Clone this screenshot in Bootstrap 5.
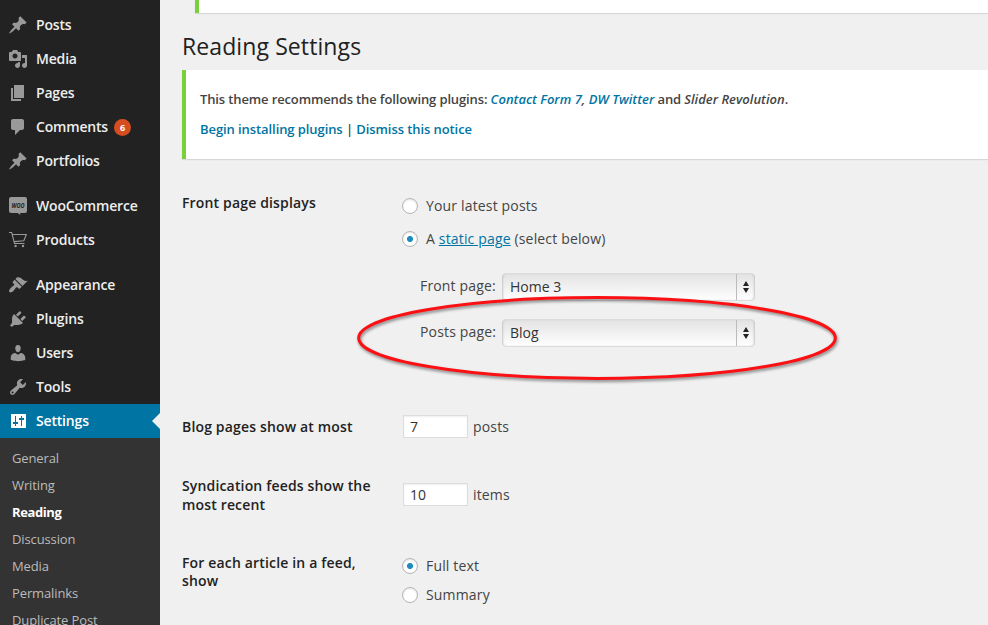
<!DOCTYPE html>
<html lang="en">
<head>
<meta charset="utf-8">
<meta name="viewport" content="width=device-width, initial-scale=1">
<title>Reading Settings</title>
<link href="https://cdn.jsdelivr.net/npm/bootstrap@5.3.0/dist/css/bootstrap.min.css" rel="stylesheet">
<style>
body{font-family:"Open Sans",sans-serif;font-size:14px;line-height:20px;color:#444;background:#f0f0f0;height:625px;overflow:hidden}
a{color:#0074a2}
.admin-menu{width:160px;height:625px;background:#222;padding-top:8px;overflow:hidden}
.admin-menu .nav-link{height:34px;padding:0 0 0 8px;gap:8px;color:#eee;font-weight:600;font-size:14px;letter-spacing:-.18px}
.admin-menu svg{width:20px;height:20px;fill:#999;flex:none}
.menu-gap{margin-top:11px}
.count{width:17px;height:17px;background:#d54e21;font-size:9px;line-height:17px;font-weight:700;padding:0;margin-left:-2px;letter-spacing:0}
.admin-menu .nav-link.active{background:#0074a2;color:#fff}
.admin-menu .active svg{fill:#fff}
.admin-menu .active::after{content:"";margin-left:auto;border:8px solid transparent;border-right-color:#f0f0f0}
.submenu{background:#333;padding-top:7px;height:190px}
.submenu .nav-link{height:27px;line-height:27px;padding:0 0 0 12px;font-size:13px;font-weight:400;color:#bbb;letter-spacing:-.12px}
.submenu .nav-link.current{color:#fff;font-weight:700;letter-spacing:-.4px}
.content-area{padding-left:22px;min-width:0}
.notice{background:#fff;border-left:4px solid #7ad03a;box-shadow:0 1px 1px rgba(0,0,0,.1)}
.notice-top{height:13px;margin-left:13px}
h1{font-size:23px;line-height:29px;font-weight:400;color:#222;margin:19px 0 9px;letter-spacing:.1px}
.notice-main{height:89px;padding:19px 14px;font-size:13px;font-weight:600;line-height:20px;letter-spacing:-.13px}
.notice-main p{margin-bottom:10px}
.notice-main em{letter-spacing:.02px}
.notice-main .actions{letter-spacing:-.08px}
.notice-main a{text-decoration:none}
.settings-form{padding-top:34px;letter-spacing:.16px}
.setting-row{display:grid;grid-template-columns:220px 1fr}
.setting-title{color:#222;font-weight:600;line-height:19px;width:205px}
.radio-line{height:20px;gap:8px}
.form-check-input.dot{width:16px;height:16px;margin:0;border:1px solid #b4b4b4;background:#fff;box-shadow:inset 0 1px 2px rgba(0,0,0,.1)}
.form-check-input.dot:checked{background:#fff radial-gradient(circle,#1e8cbe 2.7px,transparent 3.3px)}
.picker-line{height:28px;margin-left:18px}
.picker-line label{width:82px;padding-bottom:2px}
.picker{width:253px;height:28px;border:1px solid #dcdcdc;border-width:1px 0;border-radius:4px;background:linear-gradient(#e3e3e3,#fefefe);box-shadow:inset 2px 0 2px -1px #c4c4c4,inset -2px 0 2px -1px #c4c4c4;color:#333}
.picker select{appearance:none;border:0;background:none;font:inherit;color:inherit;padding:0 0 0 8px;width:234px;height:26px;outline:0}
.picker span{border-left:1px solid #bbb;width:19px;height:26px}
.picker svg{width:8px;height:14px;fill:#222}
.num{width:65px;height:23px;border:1px solid #ddd;box-shadow:inset 0 1px 2px rgba(0,0,0,.07);font-size:14px;color:#333;padding:0 6px;border-radius:0;margin-left:1px}
.circle-mark{left:350px;top:290px;pointer-events:none;filter:drop-shadow(1px 2px 1.5px rgba(0,0,0,.45))}
.front-options{margin-top:3px}
.radio-line+.radio-line{margin-top:13px}
.feed-options{margin-top:2px}
.feed-options .radio-line+.radio-line{margin-top:9px}
.first-picker{margin-top:24px}
.second-picker{margin-top:18px}
.unit{margin-left:5px}
</style>
<script src="https://cdn.jsdelivr.net/npm/bootstrap@5.3.0/dist/js/bootstrap.bundle.min.js"></script>
</head>
<body>
<div class="d-flex">
<aside class="admin-menu flex-shrink-0">
<nav class="nav flex-column flex-nowrap">
<a class="nav-link d-flex align-items-center" href="#"><svg viewBox="0 0 20 20"><path id="pin" d="M10.44 3.02l1.82-1.82 6.36 6.35-1.83 1.82c-1.05-.68-2.48-.57-3.41.36l-.75.75c-.92.93-1.04 2.35-.35 3.41l-1.83 1.82-2.41-2.41-2.8 2.79c-.42.42-3.38 2.71-3.8 2.29s1.86-3.39 2.28-3.81l2.79-2.79L4.1 9.36l1.83-1.82c1.05.69 2.48.57 3.4-.36l.75-.75c.93-.92 1.05-2.35.36-3.41z"/></svg>Posts</a>
<a class="nav-link d-flex align-items-center" href="#"><svg viewBox="0 0 20 20"><path d="M13 11V4c0-.55-.45-1-1-1h-1.67L9 1H5L3.67 3H2c-.55 0-1 .45-1 1v7c0 .55.45 1 1 1h10c.55 0 1-.45 1-1zM7 4.5c1.38 0 2.5 1.12 2.5 2.5S8.38 9.5 7 9.5 4.5 8.38 4.5 7 5.62 4.5 7 4.5zM14 6h5v10.5c0 1.38-1.12 2.5-2.5 2.5S14 17.88 14 16.5s1.12-2.5 2.5-2.5c.17 0 .34.02.5.05V9h-3V6zm-4 8.05V13h2v3.5c0 1.38-1.12 2.5-2.5 2.5S7 17.88 7 16.5 8.12 14 9.5 14c.17 0 .34.02.5.05z"/></svg>Media</a>
<a class="nav-link d-flex align-items-center" href="#"><svg viewBox="0 0 20 20"><path d="M6 15V2h10v13H6zm-1 1h8v2H3V5h2v11z"/></svg>Pages</a>
<a class="nav-link d-flex align-items-center" href="#"><svg viewBox="0 0 20 20"><path d="M5 2h9c1.1 0 2 .9 2 2v7c0 1.1-.9 2-2 2h-2l-5 5v-5H5c-1.1 0-2-.9-2-2V4c0-1.1.9-2 2-2z"/></svg>Comments<span class="badge rounded-circle count">6</span></a>
<a class="nav-link d-flex align-items-center" href="#"><svg viewBox="0 0 20 20"><use href="#pin"/></svg>Portfolios</a>
<a class="nav-link d-flex align-items-center menu-gap" href="#"><svg viewBox="0 0 20 20"><path d="M3 1h14q2 0 2 2v12q0 2-2 2h-5l.5 2-3-2H3q-2 0-2-2V3q0-2 2-2z"/><text x="10" y="11.5" text-anchor="middle" textLength="13" lengthAdjust="spacingAndGlyphs" font-size="7" font-weight="700" font-style="italic" style="fill:#222;letter-spacing:0">WOO</text></svg>WooCommerce</a>
<a class="nav-link d-flex align-items-center" href="#"><svg viewBox="0 0 20 20"><path d="M1 2.5h2.7L6.5 13.5h10M4.3 4.5h14L15.8 10.7 6 11.6" style="fill:none;stroke:#999;stroke-width:1.1"/><circle cx="7.6" cy="16" r="1.2"/><circle cx="15" cy="16" r="1.2"/></svg>Products</a>
<a class="nav-link d-flex align-items-center menu-gap" href="#"><svg viewBox="0 0 20 20"><path d="M14.48 11.06L7.41 3.99l1.5-1.5c.5-.56 2.3-.47 3.51.32 1.21.8 1.43 1.28 2.91 2.1 1.18.64 2.45 1.26 4.45.85zm-.71.71L6.7 4.7 4.93 6.47c-.39.39-.39 1.02 0 1.41l1.06 1.06c.39.39.39 1.03 0 1.42-.6.6-1.43 1.11-2.21 1.69-.35.26-.7.53-1.01.84C1.43 14.23.4 16.08 1.4 17.07c.99 1 2.84-.03 4.18-1.36.31-.31.58-.66.85-1.02.57-.78 1.08-1.61 1.69-2.21.39-.39 1.02-.39 1.41 0l1.06 1.06c.39.39 1.02.39 1.41 0z"/></svg>Appearance</a>
<a class="nav-link d-flex align-items-center" href="#"><svg viewBox="0 0 20 20"><path d="M13.11 4.36L9.87 7.6 8 5.73l3.24-3.24c.35-.34 1.05-.2 1.56.32.52.51.66 1.21.31 1.55zm-8 1.77l.91-1.12 9.01 9.01-1.19.84c-.71.71-2.63 1.16-3.82 1.16H6.14L4.9 17.26c-.59.59-1.54.59-2.12 0-.59-.58-.59-1.53 0-2.12l1.24-1.24v-3.88c0-1.13.4-3.19 1.09-3.89zm7.26 3.97l3.24-3.24c.34-.35 1.04-.21 1.55.31.52.51.66 1.21.31 1.55l-3.24 3.25z"/></svg>Plugins</a>
<a class="nav-link d-flex align-items-center" href="#"><svg viewBox="0 0 20 20"><path d="M10 9.25c-2.27 0-2.73-3.44-2.73-3.44C7 4.02 7.82 2 9.97 2c2.16 0 2.98 2.02 2.71 3.81 0 0-.41 3.44-2.68 3.44zm0 2.57L12.72 10c2.39 0 4.52 2.33 4.52 4.53v2.49s-3.65 1.13-7.24 1.13c-3.65 0-7.24-1.13-7.24-1.13v-2.49c0-2.25 1.94-4.48 4.47-4.48z"/></svg>Users</a>
<a class="nav-link d-flex align-items-center" href="#"><svg viewBox="0 0 20 20"><path d="M16.68 9.77c-1.34 1.34-3.3 1.67-4.95.99l-5.41 6.52c-.99.99-2.59.99-3.58 0s-.99-2.59 0-3.57l6.52-5.42c-.68-1.65-.35-3.61.99-4.95 1.28-1.28 3.12-1.62 4.72-1.06l-2.89 2.89 2.82 2.82 2.86-2.87c.53 1.58.18 3.39-1.08 4.65zM3.81 16.21c.4.39 1.04.39 1.43 0 .4-.4.4-1.04 0-1.43-.39-.4-1.03-.4-1.43 0-.39.39-.39 1.03 0 1.43z"/></svg>Tools</a>
<a class="nav-link d-flex align-items-center active" href="#"><svg viewBox="0 0 20 20"><path fill-rule="evenodd" d="M3.5 3h14l.5.5v13l-.5.5h-14l-.5-.5v-13zM7 5v6H5v2h2v2h1v-2h2v-2H8V5zM13 5v2h-2v2h2v6h1V9h2V7h-2V5z"/></svg>Settings</a>
</nav>
<nav class="nav flex-column flex-nowrap submenu">
<a class="nav-link" href="#">General</a>
<a class="nav-link" href="#">Writing</a>
<a class="nav-link current" href="#">Reading</a>
<a class="nav-link" href="#">Discussion</a>
<a class="nav-link" href="#">Media</a>
<a class="nav-link" href="#">Permalinks</a>
<a class="nav-link" href="#">Duplicate Post</a>
</nav>
</aside>
<main class="content-area flex-grow-1">
<div class="notice notice-top"></div>
<h1>Reading Settings</h1>
<div class="notice notice-main">
<p>This theme recommends the following plugins: <em><a href="#">Contact Form 7</a>, <a href="#">DW Twitter</a></em> and <em>Slider Revolution</em>.</p>
<p class="actions"><a href="#">Begin installing plugins</a> | <a href="#">Dismiss this notice</a></p>
</div>
<form class="settings-form">
<div class="setting-row">
<div class="setting-title">Front page displays</div>
<div class="front-options">
<div class="radio-line d-flex align-items-center"><input class="form-check-input dot" type="radio" name="front" id="f1"><label for="f1">Your latest posts</label></div>
<div class="radio-line d-flex align-items-center"><input class="form-check-input dot" type="radio" name="front" id="f2" checked><label for="f2">A <a href="#">static page</a> (select below)</label></div>
<div class="picker-line first-picker d-flex align-items-center"><label for="s1">Front page:</label><div class="picker d-flex"><select id="s1"><option>Home 3</option></select><span class="d-flex align-items-center justify-content-center"><svg viewBox="0 0 8 14"><path d="M4 1l3 5H1zM4 13L1 8h6z"/></svg></span></div></div>
<div class="picker-line second-picker d-flex align-items-center"><label for="s2">Posts page:</label><div class="picker d-flex"><select id="s2"><option>Blog</option></select><span class="d-flex align-items-center justify-content-center"><svg viewBox="0 0 8 14"><path d="M4 1l3 5H1zM4 13L1 8h6z"/></svg></span></div></div>
</div>
</div>
<div class="setting-row" style="margin-top:68px">
<div class="setting-title" style="margin-top:2px">Blog pages show at most</div>
<div class="d-flex align-items-center"><input class="num" type="text" value="7" aria-label="Posts"><span class="unit">posts</span></div>
</div>
<div class="setting-row" style="margin-top:38px">
<div class="setting-title">Syndication feeds show the most recent</div>
<div class="d-flex" style="margin-top:7px"><input class="num" type="text" value="10" aria-label="Items"><span class="unit" style="margin-top:2px">items</span></div>
</div>
<div class="setting-row" style="margin-top:40px">
<div class="setting-title" style="line-height:18px">For each article in a feed, show</div>
<div class="feed-options"><div class="radio-line d-flex align-items-center"><input class="form-check-input dot" type="radio" name="feed" id="r1" checked><label for="r1">Full text</label></div>
<div class="radio-line d-flex align-items-center"><input class="form-check-input dot" type="radio" name="feed" id="r2"><label for="r2">Summary</label></div></div>
</div>
</form>
</main>
</div>
<svg class="circle-mark position-absolute" width="500" height="100" viewBox="0 0 500 100"><ellipse cx="247" cy="48" rx="238.3" ry="40.4" fill="none" stroke="#fb1014" stroke-width="3"/></svg>
</body>
</html>
